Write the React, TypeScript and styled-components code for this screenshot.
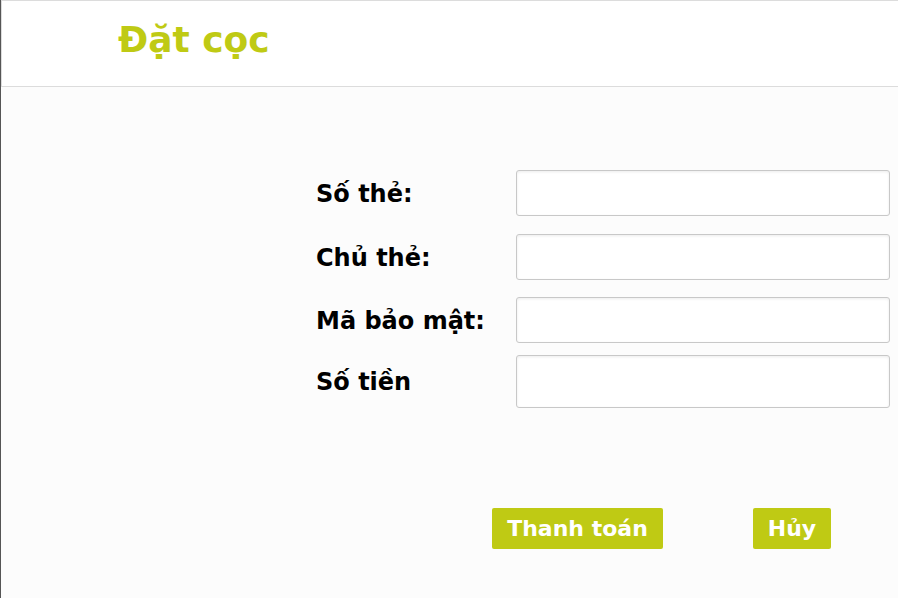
import React from "react";
import styled, { createGlobalStyle } from "styled-components";

const Global = createGlobalStyle`
  html, body {
    margin: 0;
    padding: 0;
    background: #fcfcfc;
    font-family: "DejaVu Sans", "Liberation Sans", sans-serif;
  }
`;

const Page = styled.div`
  min-height: 598px;
  border-left: 1px solid #555;
  box-sizing: border-box;
`;

const Header = styled.header`
  height: 87px;
  box-sizing: border-box;
  border: 1px solid #dcdcdc;
  border-right: none;
  background: #fff;
  padding: 18px 0 0 116px;
`;

const Title = styled.h1`
  margin: 0;
  font-size: 36px;
  line-height: 42px;
  font-weight: bold;
  color: #bfca14;
`;

const Form = styled.form`
  display: flex;
  flex-direction: column;
  padding: 83px 0 0 315px;
`;

const Field = styled.div<{ $gap: number }>`
  display: grid;
  grid-template-columns: 200px 374px;
  align-items: center;
  margin-top: ${(p) => p.$gap}px;
`;

const Label = styled.label`
  font-size: 24px;
  font-weight: bold;
  color: #000;
  padding-top: 1px;
`;

const Input = styled.input<{ $h: number }>`
  box-sizing: border-box;
  height: ${(p) => p.$h}px;
  width: 374px;
  border: 1px solid #c8c8c8;
  border-radius: 3px;
  background: #fff;
  box-shadow: inset 0 1px 3px rgba(0, 0, 0, 0.08);
  font-family: inherit;
  font-size: 16px;
  padding: 0 8px;
`;

const Actions = styled.div`
  display: flex;
  gap: 90px;
  padding: 100px 0 0 491px;
`;

const Button = styled.button<{ $w: number }>`
  width: ${(p) => p.$w}px;
  height: 41px;
  border: none;
  border-radius: 2px;
  background: #bfca14;
  color: #fff;
  font-family: inherit;
  font-size: 22px;
  font-weight: bold;
  padding: 0;
  cursor: pointer;
`;

const fields = [
  { label: "Số thẻ:", gap: 0, h: 46 },
  { label: "Chủ thẻ:", gap: 18, h: 46 },
  { label: "Mã bảo mật:", gap: 17, h: 46 },
  { label: "Số tiền", gap: 12, h: 53 },
];

export default function App() {
  return (
    <Page>
      <Global />
      <Header>
        <Title>Đặt cọc</Title>
      </Header>
      <Form onSubmit={(e) => e.preventDefault()}>
        {fields.map((f) => (
          <Field key={f.label} $gap={f.gap}>
            <Label>{f.label}</Label>
            <Input $h={f.h} />
          </Field>
        ))}
      </Form>
      <Actions>
        <Button $w={171}>Thanh toán</Button>
        <Button $w={78}>Hủy</Button>
      </Actions>
    </Page>
  );
}
